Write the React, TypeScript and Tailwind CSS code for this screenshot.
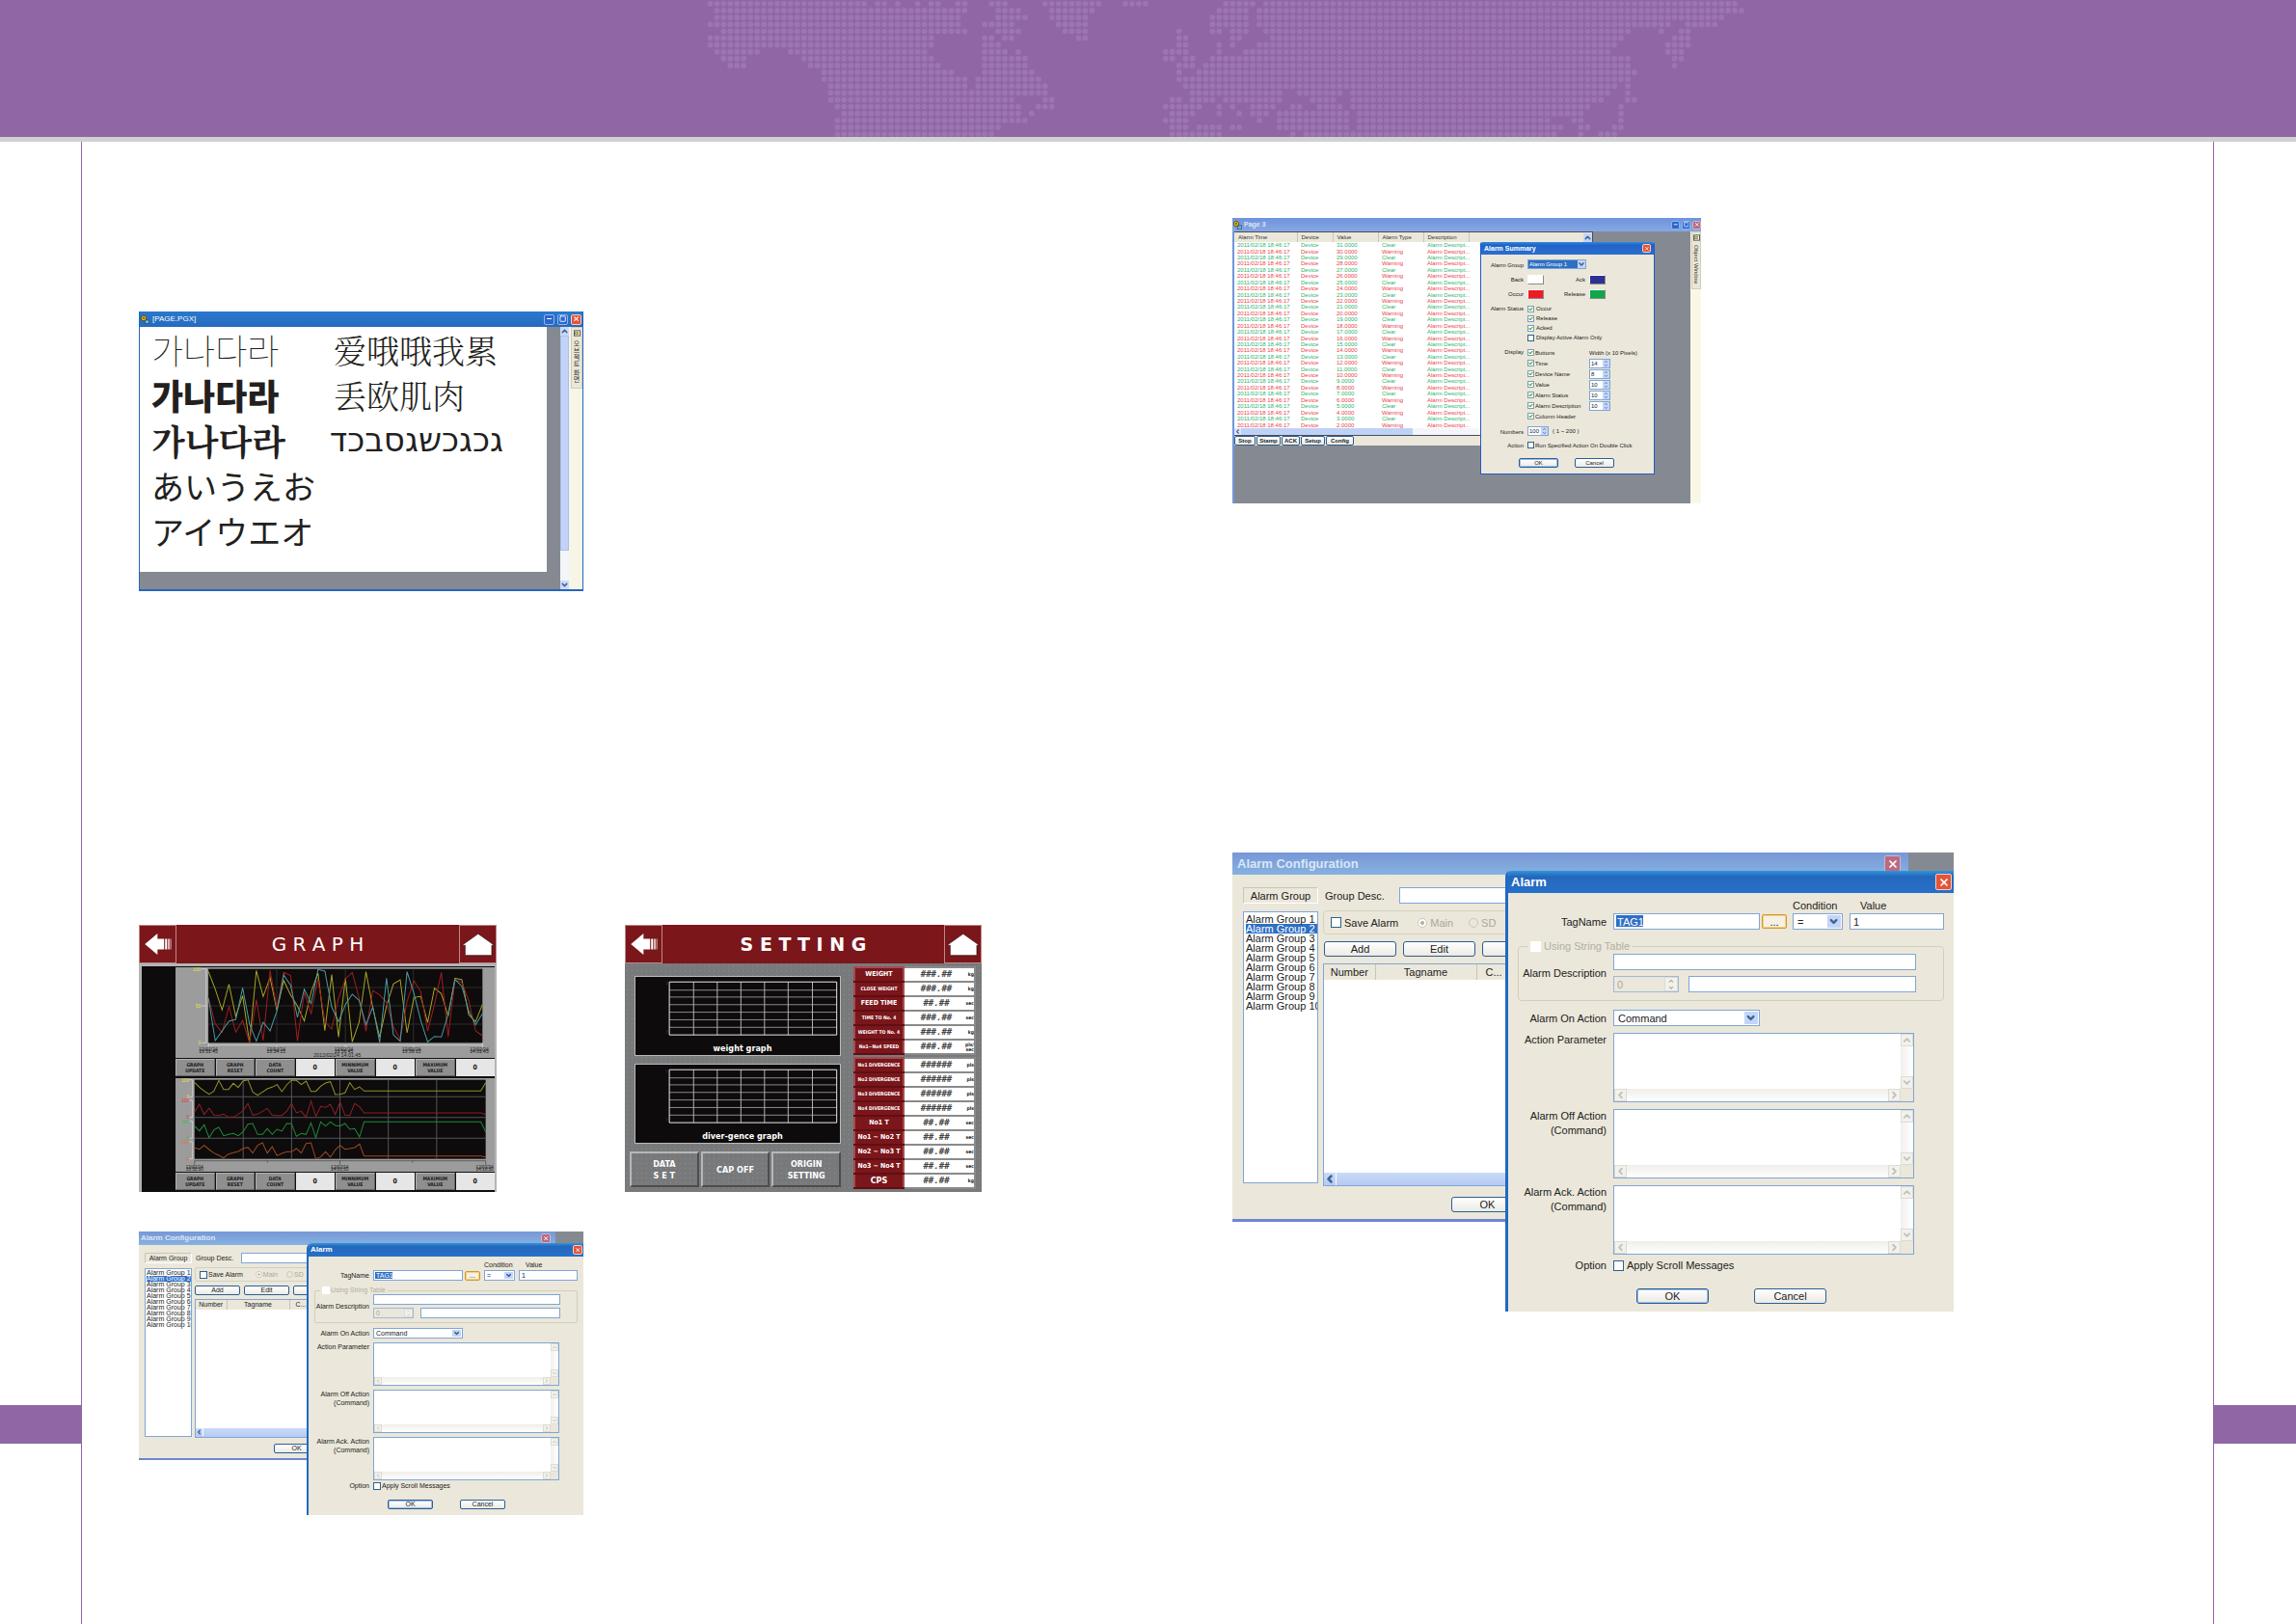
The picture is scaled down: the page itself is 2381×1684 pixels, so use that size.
import { useId } from 'react';
import type { ReactNode } from 'react';
import { Check, ChevronDown, ChevronLeft, ChevronRight, ChevronUp, Minus, Square, X } from 'lucide-react';
import clsx from 'clsx';

/* ------------------------------------------------------------------ */
/* Header: dotted world map                                            */
/* ------------------------------------------------------------------ */

// One entry per dot row, each pair is [first column, last column].
const MAP_ROWS: [number, number][][] = [
  [[0, 23], [25, 26], [28, 28], [31, 31], [33, 34], [37, 38], [42, 44], [50, 58], [62, 65], [77, 81], [83, 153]],
  [[1, 38], [43, 46], [51, 57], [76, 80], [82, 154]],
  [[1, 37], [43, 47], [51, 56], [75, 80], [82, 151]],
  [[0, 37], [41, 45], [52, 56], [75, 80], [82, 143], [146, 150]],
  [[2, 38], [43, 46], [53, 56], [70, 70], [75, 76], [78, 80], [83, 137], [142, 142], [145, 146]],
  [[0, 33], [41, 42], [44, 45], [55, 56], [70, 71], [78, 79], [84, 136], [144, 146]],
  [[0, 33], [41, 43], [70, 71], [76, 76], [78, 78], [82, 135], [143, 146]],
  [[1, 7], [12, 32], [41, 44], [46, 46], [68, 71], [76, 76], [80, 134], [143, 145]],
  [[2, 5], [14, 33], [41, 47], [68, 69], [71, 72], [75, 137], [144, 145]],
  [[3, 5], [15, 34], [41, 47], [70, 72], [74, 137], [144, 144]],
  [[17, 36], [41, 48], [70, 70], [73, 138]],
  [[17, 38], [40, 49], [70, 137]],
  [[18, 38], [40, 50], [71, 135], [137, 137]],
  [[18, 50], [72, 85], [88, 94], [96, 134], [137, 137]],
  [[18, 45], [50, 51], [69, 70], [72, 75], [77, 85], [90, 93], [96, 133], [137, 138]],
  [[19, 46], [49, 51], [68, 73], [76, 76], [78, 78], [81, 84], [87, 88], [91, 94], [96, 131], [136, 136]],
  [[20, 46], [48, 48], [69, 72], [76, 76], [79, 79], [81, 83], [85, 95], [97, 130], [136, 136]],
  [[19, 47], [68, 71], [82, 82], [85, 95], [97, 125], [129, 130], [136, 136]],
  [[19, 43], [69, 71], [73, 76], [78, 79], [85, 95], [97, 127], [130, 131], [135, 136]],
  [[19, 42], [69, 76], [87, 87], [89, 126], [130, 130], [133, 135]],
];

function DotMap() {
  return (
    <svg className="ml-[30.2%] h-[142px] w-[1100px]" viewBox="0 0 1100 142" fill="#9c76b0" aria-hidden="true">
      {MAP_ROWS.map((runs, row) =>
        runs.flatMap(([from, to]) =>
          Array.from({ length: to - from + 1 }, (_, i) => (
            <circle key={`${row}-${from + i}`} cx={17.5 + (from + i) * 6.945} cy={3.8 + row * 7.12} r={2.9} />
          )),
        ),
      )}
    </svg>
  );
}

/* ------------------------------------------------------------------ */
/* Windows chrome pieces                                               */
/* ------------------------------------------------------------------ */

function WindowButton({ kind, dim, className }: { kind: 'min' | 'max' | 'close'; dim?: boolean; className: string }) {
  const Icon = kind === 'min' ? Minus : kind === 'max' ? Square : X;
  return (
    <button
      type="button"
      aria-label={kind}
      className={clsx(
        'flex shrink-0 items-center justify-center rounded-xs border text-white',
        kind === 'close' ? (dim ? 'border-[#c9b6d6] bg-[#bb6a80]' : 'border-[#f3cfc4] bg-[#e2553a]') : 'border-[#8fb6ea] bg-[#2c66cf]',
        className,
      )}
    >
      <Icon className="h-4/5 w-4/5" strokeWidth={kind === 'max' ? 3 : 3.5} />
    </button>
  );
}

function AppIcon() {
  return (
    <svg viewBox="0 0 10 10" className="h-[9px] w-[9px] shrink-0" aria-hidden="true">
      <circle cx="3.4" cy="3.4" r="3" fill="#f4c21c" stroke="#3b3209" strokeWidth=".8" />
      <circle cx="3.4" cy="3.2" r="1" fill="#3b3209" />
      <path d="M5 5.4h4.4v4H4.6z" fill="#49b7e8" stroke="#152c57" strokeWidth=".6" />
      <path d="M6 7.6l1.4 1.2L9 6.6" stroke="#f4c21c" strokeWidth=".8" fill="none" />
    </svg>
  );
}

function Tick({ className, checked, disabled, id }: { className: string; checked?: boolean; disabled?: boolean; id: string }) {
  return (
    <span className={clsx('relative inline-flex shrink-0', className)}>
      <input
        id={id}
        type="checkbox"
        defaultChecked={checked}
        disabled={disabled}
        className={clsx('h-full w-full appearance-none border bg-white', disabled ? 'border-white' : checked ? 'border-[#7f9db9]' : 'border-[#2c628b]')}
      />
      {checked && <Check className="pointer-events-none absolute inset-0 h-full w-full p-px text-[#21a121]" strokeWidth={5} />}
    </span>
  );
}

function PushButton({ children, className, focus }: { children?: ReactNode; className: string; focus?: boolean }) {
  return (
    <button
      type="button"
      className={clsx(
        'flex shrink-0 items-center justify-center border border-[#2b5f93] bg-linear-to-b from-white to-[#eceae4] text-[#222]',
        focus && 'shadow-[inset_0_0_0_1px_#9dbdec]',
        className,
      )}
    >
      {children}
    </button>
  );
}

/* ------------------------------------------------------------------ */
/* Alarm configuration (drawn in two sizes)                            */
/* ------------------------------------------------------------------ */

const SIZES = {
  lg: {
    frame: 'h-[476px] w-[748px] text-[11px] leading-[12px]',
    title: 'h-[23px] pl-[5px] pr-[8px] text-[13px]',
    close: 'h-[17px] w-[17px]',
    back: 'h-[383px] w-[701px] border-b-3',
    backBody: 'gap-[5px] pl-[11px] pt-[13px]',
    groupCol: 'w-[78px] gap-[8px]',
    groupHead: 'h-[17px]',
    groupList: 'h-[282px] pt-[2px] pl-[2px] leading-[10px]',
    rightCol: 'gap-[7px]',
    descRow: 'h-[17px] pl-[2px]',
    descLabel: 'w-[77px]',
    saveBox: 'h-[25px] rounded-sm pl-[7px]',
    tick: 'h-[11px] w-[11px]',
    tickGap: 'ml-[3px]',
    radioA: 'ml-[20px] h-[10px] w-[10px]',
    radioB: 'ml-[16px] h-[10px] w-[10px]',
    buttonRow: 'gap-[7px] pl-[1px]',
    button: 'h-[16px] w-[75px] rounded-[3px]',
    listView: 'h-[231px]',
    listHead: 'h-[16px]',
    colA: 'w-[53px]',
    colB: 'w-[105px]',
    colC: 'pl-[9px]',
    bar: 'h-[13px]',
    barBox: 'h-[13px] w-[13px]',
    backOk: 'mt-[4px] ml-[133px]',
    front: 'top-[19px] left-[283px] border-l-3',
    frontTitle: 'h-[23px] pl-[3px] pr-[2px] text-[13px]',
    headRow: 'mt-[7px] h-[12px]',
    headCond: 'ml-[295px] w-[70px]',
    firstRow: 'mt-[2px]',
    label: 'w-[102px] mr-[7px]',
    field: 'h-[17px]',
    wide: 'w-[152px]',
    tagMark: 'bg-[length:28px_12px] bg-[position:2px_1px] pl-[3px]',
    dots: 'ml-[2px] h-[15px] w-[26px]',
    cond: 'ml-[6px] w-[52px]',
    arrow: 'w-[14px]',
    value: 'ml-[7px] w-[98px] pl-[3px]',
    fieldset: 'mt-[11px] ml-[10px] mr-[10px] h-[63px] rounded-sm',
    legend: 'ml-[9px] px-[3px] h-[12px]',
    inner: 'pt-[2px]',
    innerLabel: 'w-[91px] mr-[7px]',
    stack: 'w-[314px] gap-[6px]',
    spin: 'w-[68px] pl-[3px]',
    spinGap: 'gap-[10px]',
    rows: 'mt-[9px] gap-[7px]',
    area: 'h-[72px] w-[312px]',
    areaLabel: 'leading-[15px]',
    option: 'mt-[5px]',
    buttons: 'mt-[18px] ml-[133px] gap-[47px]',
    selectPad: 'pl-[4px]',
  },
  sm: {
    frame: 'h-[294px] w-[461px] text-[7px] leading-[8px]',
    title: 'h-[14px] pl-[2px] pr-[5px] text-[8px]',
    close: 'h-[10px] w-[10px]',
    back: 'h-[237px] w-[432px] border-b-2',
    backBody: 'gap-[3px] pl-[6px] pt-[8px]',
    groupCol: 'w-[49px] gap-[5px]',
    groupHead: 'h-[11px]',
    groupList: 'h-[175px] pt-px pl-px leading-[6px]',
    rightCol: 'gap-[4px]',
    descRow: 'h-[11px] pl-px',
    descLabel: 'w-[47px]',
    saveBox: 'h-[15px] rounded-xs pl-[4px]',
    tick: 'h-[8px] w-[8px]',
    tickGap: 'ml-px',
    radioA: 'ml-[13px] h-[7px] w-[7px]',
    radioB: 'ml-[9px] h-[7px] w-[7px]',
    buttonRow: 'gap-[4px]',
    button: 'h-[10px] w-[47px] rounded-xs',
    listView: 'h-[144px]',
    listHead: 'h-[10px]',
    colA: 'w-[32px]',
    colB: 'w-[65px]',
    colC: 'pl-[6px]',
    bar: 'h-[9px]',
    barBox: 'h-[8px] w-[8px]',
    backOk: 'mt-[2px] ml-[82px]',
    front: 'top-[12px] left-[174px] border-l-2',
    frontTitle: 'h-[14px] pl-[2px] pr-px text-[8px]',
    headRow: 'mt-[5px] h-[8px]',
    headCond: 'ml-[182px] w-[43px]',
    firstRow: 'mt-px',
    label: 'w-[63px] mr-[4px]',
    field: 'h-[11px]',
    wide: 'w-[93px]',
    tagMark: 'bg-[length:18px_7px] bg-[position:1px_1px] pl-[2px]',
    dots: 'ml-[2px] h-[10px] w-[16px]',
    cond: 'ml-[4px] w-[32px]',
    arrow: 'w-[9px]',
    value: 'ml-[4px] w-[61px] pl-[2px]',
    fieldset: 'mt-[6px] ml-[6px] mr-[6px] h-[38px] rounded-xs',
    legend: 'ml-[5px] px-[2px] h-[8px]',
    inner: 'pt-0',
    innerLabel: 'w-[56px] mr-[4px]',
    stack: 'w-[194px] gap-[3px]',
    spin: 'w-[42px] pl-[2px]',
    spinGap: 'gap-[7px]',
    rows: 'mt-[5px] gap-[4px]',
    area: 'h-[45px] w-[193px]',
    areaLabel: 'leading-[9px]',
    option: 'mt-[2px]',
    buttons: 'mt-[10px] ml-[82px] gap-[28px]',
    selectPad: 'pl-[2px]',
  },
};

type Sizes = (typeof SIZES)['lg'];

const FIELD = 'border border-[#7fa6d6] bg-white';

function XpSelect({ s, id, value, className }: { s: Sizes; id: string; value: string; className: string }) {
  return (
    <span className={clsx('relative inline-flex', FIELD, s.field, className)}>
      <select id={id} defaultValue={value} className={clsx('w-full appearance-none bg-transparent', s.selectPad)}>
        <option>{value}</option>
      </select>
      <span className={clsx('pointer-events-none absolute inset-y-px right-px flex items-center justify-center bg-[#c3d5f8] text-[#3f6394]', s.arrow)}>
        <ChevronDown className="h-full w-4/5" strokeWidth={5} />
      </span>
    </span>
  );
}

function ScrollArea({ s, id }: { s: Sizes; id: string }) {
  const box = clsx('flex items-center justify-center border border-[#dddbd2] bg-[#f2f1ec] text-[#c2c2bd]', s.barBox);
  return (
    <div className={clsx('flex flex-col', FIELD, s.area)}>
      <div className="flex min-h-0 flex-1">
        <textarea id={id} className="min-w-0 flex-1 resize-none bg-white" />
        <div className="flex flex-col justify-between bg-linear-to-r from-[#f1f0ee] to-white">
          <span className={box}><ChevronUp className="h-full w-full" strokeWidth={4} /></span>
          <span className={box}><ChevronDown className="h-full w-full" strokeWidth={4} /></span>
        </div>
      </div>
      <div className="flex bg-[#ebe7da]">
        <div className="flex flex-1 justify-between bg-linear-to-b from-[#efeeea] to-white">
          <span className={box}><ChevronLeft className="h-full w-full" strokeWidth={4} /></span>
          <span className={box}><ChevronRight className="h-full w-full" strokeWidth={4} /></span>
        </div>
        <span className={s.barBox} />
      </div>
    </div>
  );
}

function GroupWindow({ s, uid }: { s: Sizes; uid: string }) {
  return (
    <section className={clsx('flex shrink-0 flex-col overflow-hidden border-[#6f84d3] bg-[#ebe7da]', s.back)}>
      <div className={clsx('flex shrink-0 items-center justify-between bg-linear-to-b from-[#7797d6] to-[#86b2e2] font-bold text-[#dbe5f5]', s.title)}>
        <h2>Alarm Configuration</h2>
        <WindowButton kind="close" dim className={s.close} />
      </div>
      <div className={clsx('flex', s.backBody)}>
        <div className={clsx('flex shrink-0 flex-col', s.groupCol)}>
          <div className={clsx('flex items-center justify-center border border-[#c9c6b8] border-r-white border-b-white', s.groupHead)}>Alarm Group</div>
          <ul className={clsx('overflow-hidden whitespace-nowrap', FIELD, s.groupList)}>
            {Array.from({ length: 10 }, (_, i) => (
              <li key={i} className={clsx(i === 1 && 'bg-[#2f6fc4] text-white')}>Alarm Group {i + 1}</li>
            ))}
          </ul>
        </div>
        <div className={clsx('flex min-w-0 flex-1 flex-col', s.rightCol)}>
          <div className={clsx('flex items-center', s.descRow)}>
            <label htmlFor={`${uid}-desc`} className={clsx('shrink-0', s.descLabel)}>Group Desc.</label>
            <input id={`${uid}-desc`} className={clsx('h-full min-w-0 flex-1', FIELD)} />
          </div>
          <div className={clsx('flex items-center border border-[#d3d1c0]', s.saveBox)}>
            <Tick id={`${uid}-save`} className={s.tick} />
            <label htmlFor={`${uid}-save`} className={s.tickGap}>Save Alarm</label>
            <input id={`${uid}-main`} type="radio" name={`${uid}-where`} defaultChecked disabled className={clsx('shrink-0 appearance-none rounded-full border border-[#c9c7ba] bg-radial from-[#b5b3a6] from-30% to-white to-40%', s.radioA)} />
            <label htmlFor={`${uid}-main`} className={clsx('text-[#aca899]', s.tickGap)}>Main</label>
            <input id={`${uid}-sd`} type="radio" name={`${uid}-where`} disabled className={clsx('shrink-0 appearance-none rounded-full border border-[#c9c7ba]', s.radioB)} />
            <label htmlFor={`${uid}-sd`} className={clsx('text-[#aca899]', s.tickGap)}>SD</label>
          </div>
          <div className={clsx('flex', s.buttonRow)}>
            <PushButton className={s.button}>Add</PushButton>
            <PushButton className={s.button}>Edit</PushButton>
            <PushButton className={s.button} />
          </div>
          <div className={clsx('flex flex-col justify-between', FIELD, s.listView)}>
            <table className="w-full table-fixed text-left">
              <thead className="bg-[#ebe8db]">
                <tr className={s.listHead}>
                  <th className={clsx('border-r border-[#c7c5b2] text-center font-normal', s.colA)}>Number</th>
                  <th className={clsx('border-r border-[#c7c5b2] text-center font-normal', s.colB)}>Tagname</th>
                  <th className={clsx('font-normal', s.colC)}>C...</th>
                </tr>
              </thead>
            </table>
            <div className={clsx('flex bg-linear-to-b from-[#c9daf9] to-[#b6cbf3]', s.bar)}>
              <span className={clsx('flex items-center justify-center border-r border-white text-[#3f6394]', s.barBox)}>
                <ChevronLeft className="h-full w-full" strokeWidth={5} />
              </span>
            </div>
          </div>
          <div className={s.backOk}>
            <PushButton className={s.button}>OK</PushButton>
          </div>
        </div>
      </div>
    </section>
  );
}

function AlarmDialog({ s, uid }: { s: Sizes; uid: string }) {
  const label = clsx('shrink-0 text-right whitespace-nowrap', s.label);
  const areas = [
    ['param', 'Action Parameter', ''],
    ['off', 'Alarm Off Action', '(Command)'],
    ['ack', 'Alarm Ack. Action', '(Command)'],
  ];
  return (
    <section className={clsx('absolute right-0 bottom-0 overflow-hidden rounded-tl-md border-[#2069c4] bg-[#ebe7da]', s.front)}>
      <div className={clsx('flex items-center justify-between bg-linear-to-b from-[#3295dc] via-[#2468bd] via-25% to-[#2770c8] font-bold text-white', s.frontTitle)}>
        <h2>Alarm</h2>
        <WindowButton kind="close" className={s.close} />
      </div>
      <div className={clsx('flex', s.headRow)}>
        <label htmlFor={`${uid}-cond`} className={s.headCond}>Condition</label>
        <label htmlFor={`${uid}-value`}>Value</label>
      </div>
      <div className={clsx('flex items-center', s.firstRow)}>
        <label htmlFor={`${uid}-tag`} className={label}>TagName</label>
        <input
          id={`${uid}-tag`}
          defaultValue="TAG1"
          className={clsx('border border-[#7fa6d6] bg-white bg-[linear-gradient(#2f6fc4,#2f6fc4)] bg-no-repeat text-white', s.field, s.wide, s.tagMark)}
        />
        <button type="button" className={clsx('flex items-center justify-center rounded-xs border border-[#cf9a2f] bg-[#f4f1e6] shadow-[inset_0_0_0_1px_#f8cf7c]', s.dots)}>...</button>
        <XpSelect s={s} id={`${uid}-cond`} value="=" className={s.cond} />
        <input id={`${uid}-value`} defaultValue="1" className={clsx(FIELD, s.field, s.value)} />
      </div>

      <fieldset className={clsx('border border-[#d0cfbd]', s.fieldset)}>
        <legend className={s.legend}>
          <span className="flex items-center text-[#b0b0a2]">
            <Tick id={`${uid}-table`} disabled className={s.tick} />
            <label htmlFor={`${uid}-table`} className={s.tickGap}>Using String Table</label>
          </span>
        </legend>
        <div className={clsx('flex items-center', s.inner)}>
          <label htmlFor={`${uid}-adesc`} className={clsx('shrink-0 text-right whitespace-nowrap', s.innerLabel)}>Alarm Description</label>
          <div className={clsx('flex flex-col', s.stack)}>
            <input id={`${uid}-adesc`} className={clsx('w-full', FIELD, s.field)} />
            <div className={clsx('flex', s.spinGap)}>
              <span className={clsx('flex shrink-0 items-center justify-between border border-[#9fb9d8] text-[#aca899]', s.field, s.spin)}>
                <input aria-label="String number" defaultValue="0" disabled className="w-1/2 bg-transparent" />
                <span className={clsx('flex h-full flex-col border border-[#dddbd2] bg-[#f2f1ec]', s.arrow)}>
                  <ChevronUp className="h-1/2 w-full" strokeWidth={4} />
                  <ChevronDown className="h-1/2 w-full" strokeWidth={4} />
                </span>
              </span>
              <input aria-label="String text" className={clsx('min-w-0 flex-1', FIELD, s.field)} />
            </div>
          </div>
        </div>
      </fieldset>

      <div className={clsx('flex flex-col', s.rows)}>
        <div className="flex items-center">
          <label htmlFor={`${uid}-on`} className={label}>Alarm On Action</label>
          <XpSelect s={s} id={`${uid}-on`} value="Command" className={s.wide} />
        </div>
        {areas.map(([key, line1, line2]) => (
          <div key={key} className="flex items-start">
            <label htmlFor={`${uid}-${key}`} className={clsx(label, s.areaLabel)}>
              {line1}
              {line2 && <><br />{line2}</>}
            </label>
            <ScrollArea s={s} id={`${uid}-${key}`} />
          </div>
        ))}
      </div>
      <div className={clsx('flex items-center', s.option)}>
        <span className={label}>Option</span>
        <Tick id={`${uid}-scroll`} className={s.tick} />
        <label htmlFor={`${uid}-scroll`} className={s.tickGap}>Apply Scroll Messages</label>
      </div>
      <div className={clsx('flex', s.buttons)}>
        <PushButton focus className={s.button}>OK</PushButton>
        <PushButton className={s.button}>Cancel</PushButton>
      </div>
    </section>
  );
}

function AlarmConfiguration({ size, className }: { size: 'lg' | 'sm'; className?: string }) {
  const uid = useId();
  const s = SIZES[size];
  return (
    <div className={clsx('relative flex items-start text-[#222]', s.frame, className)}>
      <GroupWindow s={s} uid={uid} />
      <div className="h-1/12 flex-1 bg-[#858a92]" />
      <AlarmDialog s={s} uid={uid} />
    </div>
  );
}

/* ------------------------------------------------------------------ */
/* [PAGE.PGX] font sample window                                       */
/* ------------------------------------------------------------------ */

function SideTab({ children, className }: { children: ReactNode; className: string }) {
  return (
    <div className={clsx('ml-auto flex items-center gap-1 border border-[#d0cdb9] bg-[#ebe7d6] whitespace-nowrap text-[#333] [writing-mode:vertical-rl]', className)}>
      <svg viewBox="0 0 8 8" className="h-[7px] w-[7px] shrink-0" aria-hidden="true">
        <rect x=".5" y="1" width="7" height="6" fill="#fff" stroke="#444" />
        <rect x="2" y="2.5" width="3" height="3" fill="#e5d51e" stroke="#444" strokeWidth=".6" />
      </svg>
      {children}
    </div>
  );
}

function FontWindow() {
  return (
    <section className="flex h-[290px] w-[461px] flex-col border-x border-b-2 border-[#2666bd] bg-[#858a92]">
      <div className="flex h-[16px] shrink-0 items-center gap-[3px] bg-linear-to-b from-[#2a78cc] to-[#256bc0] px-px text-[8px] text-white">
        <AppIcon />
        <h2 className="flex-1 font-medium">[PAGE.PGX]</h2>
        <WindowButton kind="min" className="h-[11px] w-[11px]" />
        <WindowButton kind="max" className="h-[11px] w-[11px]" />
        <WindowButton kind="close" className="h-[11px] w-[11px]" />
      </div>
      <div className="flex min-h-0 flex-1">
        <div className="grid h-[254px] w-[422px] grid-cols-[189px_1fr] content-start bg-white px-[12px] text-[34px] leading-[47px] text-[#231f20]">
          <div className="font-['Noto_Sans_CJK_JP',sans-serif]">
            <p className="font-['Noto_Sans_CJK_KR',sans-serif] text-[36px] font-thin">가나다라</p>
            <p className="font-['Noto_Sans_CJK_KR',sans-serif] text-[36px] font-black">가나다라</p>
            <p className="font-['Noto_Serif_CJK_KR','Noto_Sans_CJK_KR',serif] text-[36px] font-bold">가나다라</p>
            <p>あいうえお</p>
            <p>アイウエオ</p>
          </div>
          <div className="font-['Noto_Serif_CJK_SC','Noto_Sans_CJK_SC',serif] font-light">
            <p>爱哦哦我累</p>
            <p>丢欧肌肉</p>
            <p dir="rtl" className="w-[176px] font-['DejaVu_Sans',sans-serif] font-normal whitespace-nowrap">גכגכשגסבכד</p>
          </div>
        </div>
        <div className="ml-auto flex w-[9px] flex-col justify-between bg-[#f4f5fb] text-[#3f6394]">
          <span className="bg-[#cbdaf9]"><ChevronUp className="h-[9px] w-[9px]" strokeWidth={4} /></span>
          <span className="flex-1 border border-[#a9c0ee] bg-[#c3d3f7]" />
          <span className="mt-[31px] bg-[#cbdaf9]"><ChevronDown className="h-[9px] w-[9px]" strokeWidth={4} /></span>
        </div>
        <div className="w-[14px] bg-[#f6f5e6]">
          <SideTab className="h-[64px] w-[12px] pt-[2px] font-['Noto_Sans_CJK_KR',sans-serif] text-[7px] leading-[10px]">오브젝트 화면</SideTab>
        </div>
      </div>
    </section>
  );
}

/* ------------------------------------------------------------------ */
/* Page 3 alarm list                                                   */
/* ------------------------------------------------------------------ */

const ALARM_ROWS = Array.from({ length: 30 }, (_, i) => ({
  value: `${31 - i}.0000`,
  type: i % 2 === 0 ? 'Clear' : 'Warning',
}));

function Spinner({ id, label, value }: { id: string; label: string; value: string }) {
  return (
    <span className={clsx('flex h-[10px] w-[22px] items-center', FIELD)}>
      <input id={id} aria-label={label} defaultValue={value} className="min-w-0 flex-1 pl-px leading-[8px]" />
      <span className="flex h-full w-[7px] flex-col bg-[#c3d5f8] text-[#3f6394]">
        <ChevronUp className="h-1/2 w-full" strokeWidth={5} />
        <ChevronDown className="h-1/2 w-full" strokeWidth={5} />
      </span>
    </span>
  );
}

function Swatch({ label, color }: { label: string; color: string }) {
  return (
    <>
      <span className="text-right">{label}</span>
      <button type="button" aria-label={label} className={clsx('h-[10px] w-[17px] border border-white border-r-[#8d8a7d] border-b-[#8d8a7d]', color)} />
    </>
  );
}

function AlarmSummary() {
  const status = ['Occur', 'Release', 'Acked', 'Display Active Alarm Only'];
  const display = [
    ['Buttons', ''],
    ['Time', '14'],
    ['Device Name', '8'],
    ['Value', '10'],
    ['Alarm Status', '10'],
    ['Alarm Description', '10'],
    ['Column Header', ''],
  ];
  const label = 'w-[44px] shrink-0 pt-px text-right';
  return (
    <section className="absolute top-[25px] left-[257px] h-[241px] w-[181px] overflow-hidden rounded-t-xs border border-t-0 border-[#1f5cc0] bg-[#ebe7da] text-[6px] leading-[8px] text-[#222]">
      <div className="flex h-[13px] items-center justify-between bg-linear-to-b from-[#2f8ae0] via-[#2163c6] via-25% to-[#2a6fd0] px-[3px] text-[7px] font-bold text-white">
        <h2>Alarm Summary</h2>
        <WindowButton kind="close" className="h-[9px] w-[9px]" />
      </div>
      <div className="mt-[5px] flex items-center gap-[4px]">
        <label htmlFor="sum-group" className={label}>Alarm Group</label>
        <span className={clsx('relative flex h-[10px] w-[61px]', FIELD)}>
          <select id="sum-group" defaultValue="Alarm Group 1" className="w-[51px] appearance-none bg-[#2f6fc4] pl-px leading-[8px] text-white">
            <option>Alarm Group 1</option>
          </select>
          <span className="pointer-events-none absolute inset-y-0 right-0 flex w-[8px] items-center justify-center bg-[#c3d5f8] text-[#3f6394]">
            <ChevronDown className="h-full w-full" strokeWidth={5} />
          </span>
        </span>
      </div>
      <div className="mt-[6px] grid grid-cols-[44px_17px_39px_17px] items-center gap-x-[4px] gap-y-[5px]">
        <Swatch label="Back" color="bg-white" />
        <Swatch label="Ack" color="bg-[#2e3192]" />
        <Swatch label="Occur" color="bg-[#ed1c24]" />
        <Swatch label="Release" color="bg-[#0fa74a]" />
      </div>
      <div className="mt-[5px] flex gap-[4px]">
        <span className={label}>Alarm Status</span>
        <div>
          {status.map((name, i) => (
            <div key={name} className="flex h-[10px] items-center gap-[2px]">
              <Tick id={`sum-s${i}`} checked={i < 3} className="h-[7px] w-[7px]" />
              <label htmlFor={`sum-s${i}`}>{name}</label>
            </div>
          ))}
        </div>
      </div>
      <div className="mt-[5px] flex gap-[4px]">
        <span className={label}>Display</span>
        <div>
          {display.map(([name, width], i) => (
            <div key={name} className="flex h-[11px] items-center">
              <Tick id={`sum-d${i}`} checked className="mr-px h-[7px] w-[7px]" />
              <label htmlFor={`sum-d${i}`} className="w-[56px]">{name}</label>
              {width && <Spinner id={`sum-w${i}`} label={`${name} width`} value={width} />}
              {i === 0 && <span>Width (x 10 Pixels)</span>}
            </div>
          ))}
        </div>
      </div>
      <div className="mt-[5px] flex items-center gap-[4px]">
        <label htmlFor="sum-num" className={label}>Numbers</label>
        <Spinner id="sum-num" label="Numbers" value="100" />
        <span>( 1 ~ 200 )</span>
      </div>
      <div className="mt-[5px] flex items-center gap-[4px]">
        <span className={label}>Action</span>
        <span className="flex items-center gap-px">
          <Tick id="sum-run" className="h-[7px] w-[7px]" />
          <label htmlFor="sum-run">Run Specified Action On Double Click</label>
        </span>
      </div>
      <div className="mt-[9px] ml-[39px] flex gap-[17px]">
        <PushButton focus className="h-[10px] w-[41px] rounded-xs">OK</PushButton>
        <PushButton className="h-[10px] w-[41px] rounded-xs">Cancel</PushButton>
      </div>
    </section>
  );
}

function AlarmListWindow() {
  const head = 'border-r border-[#c7c5b2] pl-[4px] font-normal';
  return (
    <section className="relative flex h-[296px] w-[486px] flex-col bg-[#858a92]">
      <div className="flex h-[14px] shrink-0 items-center gap-[2px] bg-linear-to-b from-[#6f93dc] to-[#86a8e4] pl-px text-[7px] text-[#dbe5f5]">
        <AppIcon />
        <h2 className="flex-1 font-bold">Page 3</h2>
        <WindowButton kind="min" className="h-[9px] w-[9px]" />
        <WindowButton kind="max" className="h-[9px] w-[9px]" />
        <WindowButton kind="close" dim className="h-[9px] w-[9px]" />
      </div>
      <div className="flex flex-1 border-l-2 border-[#6f97dc]">
        <div className="w-[372px]">
          <div className="flex h-[212px] flex-col justify-between border-t border-r border-b border-[#4a4d55] bg-white">
            <table className="w-full table-fixed text-left text-[6px] leading-[6px] whitespace-nowrap">
              <thead className="bg-[#ebe8db] text-[#333]">
                <tr className="h-[10px]">
                  <th className={clsx(head, 'w-[65px]')}>Alarm Time</th>
                  <th className={clsx(head, 'w-[37px]')}>Device</th>
                  <th className={clsx(head, 'w-[47px]')}>Value</th>
                  <th className={clsx(head, 'w-[47px]')}>Alarm Type</th>
                  <th className={clsx(head, 'w-[47px]')}>Description</th>
                  <th className="h-[10px]">
                    <span className="flex justify-end">
                      <ChevronUp className="h-[9px] w-[9px] bg-[#c3d5f8] text-[#3f6394]" strokeWidth={4} />
                    </span>
                  </th>
                </tr>
              </thead>
            </table>
            <table className="h-[194px] w-full table-fixed text-left text-[6px] leading-[6px] whitespace-nowrap">
              <colgroup>
                <col className="w-[66px]" />
                <col className="w-[37px]" />
                <col className="w-[47px]" />
                <col className="w-[47px]" />
                <col />
              </colgroup>
              <tbody>
                {ALARM_ROWS.map((row) => (
                  <tr key={row.value} className={row.type === 'Clear' ? 'text-[#2bb673]' : 'text-[#ee3f48]'}>
                    <td className="pl-[3px]">2011/02/18 18:46:17</td>
                    <td className="pl-[3px]">Device</td>
                    <td className="pl-[3px]">{row.value}</td>
                    <td className="pl-[3px]">{row.type}</td>
                    <td className="pl-[3px]">Alarm Descript...</td>
                  </tr>
                ))}
              </tbody>
            </table>
            <div className="flex h-[7px] bg-[#f4f5fb]">
              <ChevronLeft className="h-[7px] w-[7px] bg-[#dde6fb] text-[#3f6394]" strokeWidth={4} />
              <span className="w-[178px] bg-[#bfd2f6]" />
            </div>
          </div>
          <div className="flex h-[10px] gap-px bg-[#ebe7da] text-[6px] leading-[8px] font-bold">
            <PushButton className="w-[22px] rounded-xs">Stop</PushButton>
            <PushButton className="w-[25px] rounded-xs">Stamp</PushButton>
            <PushButton className="w-[19px] rounded-xs">ACK</PushButton>
            <PushButton className="w-[25px] rounded-xs">Setup</PushButton>
            <PushButton className="w-[29px] rounded-xs">Config</PushButton>
          </div>
        </div>
        <div className="ml-auto w-[11px] bg-[#f9f8e6]">
          <SideTab className="h-[60px] w-[10px] pt-[2px] text-[6px] leading-[8px]">Object Window</SideTab>
        </div>
      </div>
      <AlarmSummary />
    </section>
  );
}

/* ------------------------------------------------------------------ */
/* HMI panels                                                          */
/* ------------------------------------------------------------------ */

function HmiHeader({ title, className }: { title: string; className?: string }) {
  const corner = 'flex w-[39px] shrink-0 items-center justify-center border border-[#b98a8c]';
  return (
    <header className="flex h-[40px] shrink-0 items-stretch bg-[#7b161b] font-['DejaVu_Sans',sans-serif] text-white">
      <button type="button" aria-label="Back" className={corner}>
        <svg viewBox="0 0 80 64" className="h-[22px] w-[28px]" fill="#fff" aria-hidden="true">
          <path d="M0 32L38 0v16h20v32H38v16z" />
          <path d="M61 16h6v32h-6zM70 16h4v32h-4zM77 16h2v32h-2z" />
        </svg>
      </button>
      <h2 className={clsx('flex flex-1 items-center justify-center', className)}>{title}</h2>
      <button type="button" aria-label="Home" className={corner}>
        <svg viewBox="0 0 104 76" className="h-[25px] w-[35px]" aria-hidden="true">
          <path d="M53 4L2 40h10v32h84V40h8z" fill="#fff" stroke="#2b0b0c" strokeWidth="2" />
        </svg>
      </button>
    </header>
  );
}

function HmiToolbar() {
  const cells = ['GRAPH UPDATE', 'GRAPH RESET', 'DATA COUNT', '0', 'MINNIMUM VALUE', '0', 'MAXIMUM VALUE', '0'];
  return (
    <div className="grid h-[20px] grid-cols-8 gap-px bg-[#111] py-px font-['DejaVu_Sans_Condensed','DejaVu_Sans',sans-serif] leading-[6px] font-bold">
      {cells.map((text, i) =>
        text === '0' ? (
          <output key={i} className="flex items-center justify-center bg-[#e6e6e6] text-[7px] text-[#111]">{text}</output>
        ) : (
          <button key={i} type="button" className="border border-[#b4b4b4] border-r-[#666] border-b-[#666] bg-[#8f8f8f] px-[5px] text-[5px] text-[#1a1a1a]">
            {text}
          </button>
        ),
      )}
    </div>
  );
}

const TREND = {
  yellow: [187, 242, 307, 227, 327, 262, 409, 184, 265, 206, 308, 215, 260, 295, 341, 250, 192, 371, 197, 391, 208, 406, 345, 188, 300, 391, 295, 226, 213, 378, 268, 265, 346, 239, 256, 326, 208, 213, 322, 343, 290],
  red: [268, 350, 377, 296, 376, 340, 408, 275, 402, 184, 300, 190, 200, 403, 252, 318, 210, 343, 366, 270, 210, 190, 270, 373, 246, 260, 283, 360, 397, 280, 216, 250, 372, 290, 190, 390, 212, 222, 277, 372, 387],
  cyan: [270, 402, 372, 342, 336, 238, 350, 404, 345, 372, 310, 198, 230, 330, 242, 287, 181, 186, 298, 343, 290, 258, 277, 353, 297, 408, 208, 384, 404, 188, 255, 340, 406, 389, 391, 320, 212, 233, 310, 353, 318],
};

// Each strip trace holds the moving part, then stays flat until the last sample.
const STRIPS = [
  { color: '#8f9427', top: 524, flat: 559, end: 533, ys: [532, 547, 559, 569, 559, 526, 554, 554, 535, 548, 528, 524, 562, 572, 562, 552, 547, 539, 561, 540, 525, 526, 539, 528, 560, 560, 544, 534, 530, 570, 569, 565, 533, 554, 546] },
  { color: '#8c2027', top: 588, flat: 627, end: 632, ys: [625, 600, 632, 612, 634, 635, 631, 640, 640, 632, 620, 598, 634, 631, 622, 613, 634, 635, 635, 622, 598, 627, 622, 641, 590, 638, 607, 610, 600, 632, 592, 634, 635, 598, 608] },
  { color: '#1f8a3d', top: 653, flat: 655, end: 686, ys: [668, 683, 664, 704, 680, 672, 698, 694, 691, 698, 686, 662, 660, 694, 694, 676, 694, 678, 684, 660, 661, 700, 691, 694, 658, 704, 655, 668, 655, 666, 668, 660, 678, 676, 702] },
  { color: '#9a4a26', top: 717, flat: 761, end: 764, ys: [736, 740, 728, 741, 752, 759, 767, 755, 751, 747, 738, 734, 752, 728, 720, 752, 732, 760, 753, 748, 748, 738, 752, 722, 720, 770, 764, 748, 765, 742, 728, 740, 738, 735, 724] },
];

const STRIP_LABELS = ['#e6e23c', '#ee2a34', '#2fc24b', '#ec6a38'];

const line = (ys: number[], x0: number, step: number) => ys.map((y, i) => `${x0 + i * step},${y}`).join(' ');

function TrendChart() {
  return (
    <svg viewBox="155 174 990 282" className="block h-[94px] w-full bg-[#9c9c9c]" preserveAspectRatio="none" role="img" aria-label="Trend graph">
      <rect x="257" y="179" width="850" height="230" fill="#0d0b0b" />
      <path d="M257 237h850M257 294h850M257 351h850M469 179v230M682 179v230M893 179v230" stroke="#2f2e2e" strokeWidth="3" />
      <g fill="none" strokeWidth="3">
        <polyline points={line(TREND.yellow, 257, 21.25)} stroke="#a5a524" />
        <polyline points={line(TREND.red, 257, 21.25)} stroke="#a01d22" />
        <polyline points={line(TREND.cyan, 257, 21.25)} stroke="#4a9ba3" />
      </g>
      <path d="M250 179v230M236 179h14M236 294h14M236 409h14M257 416h850M257 409v14M469 416v10M682 416v10M893 416v10M1107 409v16" stroke="#e4e4e4" strokeWidth="2" fill="none" />
      <g fill="#e6e23c" fontSize="15" textAnchor="end">
        <text x="234" y="186">100</text>
        <text x="234" y="299">50</text>
        <text x="234" y="414">0</text>
      </g>
      <g fill="#222" fontSize="15" textAnchor="middle">
        {['13:51:45', '13:54:15', '13:56:45', '13:59:15', '14:01:45'].map((time, i) => (
          <g key={time}>
            <text x={257 + i * 210} y="434">12/02/24</text>
            <text x={257 + i * 210} y="442">{time}</text>
          </g>
        ))}
        <text x="657" y="452" fontSize="16">2012/02/24 14:01:45</text>
      </g>
    </svg>
  );
}

function StripChart() {
  return (
    <svg viewBox="155 519 990 291" className="block h-[97px] w-full bg-[#9c9c9c]" preserveAspectRatio="none" role="img" aria-label="Strip graphs">
      <rect x="214" y="524" width="903" height="246" fill="#0d0b0b" />
      <path d="M214 577h903M214 641h903M214 706h903M365 524v246M515 524v246M665 524v246M815 524v246M965 524v246" stroke="#55555a" strokeWidth="3" />
      {STRIPS.map((strip, i) => (
        <g key={strip.color}>
          <polyline
            points={`${line(strip.ys, 214, 15.05)} 740,${strip.flat} 1102,${strip.flat} 1117,${strip.end}`}
            fill="none"
            stroke={strip.color}
            strokeWidth="3"
          />
          <path d={`M198 ${strip.top}h10v53h-10`} fill="none" stroke="#e4e4e4" strokeWidth="2" />
          <g fill={STRIP_LABELS[i]} fontSize="14" textAnchor="end">
            <text x="197" y={strip.top + 6}>100</text>
            <text x="197" y={strip.top + 58}>0</text>
          </g>
        </g>
      ))}
      <path d="M214 776h903M214 776v12M440 776v6M665 776v12M890 776v6M1117 776v12" stroke="#444" strokeWidth="2" />
      <g fill="#222" fontSize="14" textAnchor="middle">
        {['13:52:30', '14:01:30', '14:10:30'].map((time, i) => (
          <g key={time}>
            <text x={214 + i * 450} y="801">12/02/24</text>
            <text x={214 + i * 450} y="808">{time}</text>
          </g>
        ))}
      </g>
    </svg>
  );
}

function GraphPanel() {
  return (
    <section className="flex h-[277px] w-[371px] flex-col bg-[#9c9c9c]">
      <HmiHeader title="G R A P H" className="text-[20px]" />
      <div className="flex min-h-0 flex-1 border-t-3 border-r-2 border-l-3 border-[#b4b4b4] bg-[#0d0b0b] pt-px">
        <div className="w-[35px] shrink-0" />
        <div className="min-w-0 flex-1 font-['Liberation_Sans',sans-serif]">
          <TrendChart />
          <HmiToolbar />
          <div className="h-px bg-[#0d0b0b]" />
          <StripChart />
          <HmiToolbar />
        </div>
      </div>
    </section>
  );
}

const WEIGHT_ROWS = [
  ['WEIGHT', '###.##', 'kg'],
  ['CLOSE WEIGHT', '###.##', 'kg'],
  ['FEED TIME', '##.##', 'sec'],
  ['TIME TO No. 4', '###.##', 'sec'],
  ['WEIGHT TO No. 4', '###.##', 'kg'],
  ['No1~No4 SPEED', '###.##', 'pls/ sec'],
];

const DIVERGENCE_ROWS = [
  ['No1 DIVERGENCE', '######', 'pls'],
  ['No2 DIVERGENCE', '######', 'pls'],
  ['No3 DIVERGENCE', '######', 'pls'],
  ['No4 DIVERGENCE', '######', 'pls'],
  ['No1 T', '##.##', 'sec'],
  ['No1 ~ No2 T', '##.##', 'sec'],
  ['No2 ~ No3 T', '##.##', 'sec'],
  ['No3 ~ No4 T', '##.##', 'sec'],
  ['CPS', '##.##', 'kg'],
];

function ValueTable({ rows }: { rows: string[][] }) {
  return (
    <table className="w-full table-fixed border border-[#4a1416] text-center leading-[5px] font-bold">
      <tbody>
        {rows.map(([name, value, unit]) => (
          <tr key={name} className="h-[15px]">
            <th className={clsx('w-[51px] border-2 border-[#a64b50] border-b-[#5f0f14] bg-[#7b161b] p-0 whitespace-nowrap text-white', name.length > 11 ? 'text-[5px]' : name === 'CPS' ? 'text-[9px]' : 'text-[7px]')}>
              {name}
            </th>
            <td className="border-2 border-r-0 border-[#8a8a8a] bg-white pl-[8px] font-['DejaVu_Sans_Mono',monospace] text-[9px] font-bold italic text-[#444]">{value}</td>
            <td className="w-[15px] border-2 border-l-0 border-[#8a8a8a] bg-white text-right text-[5px] text-[#222]">{unit}</td>
          </tr>
        ))}
      </tbody>
    </table>
  );
}

function GridBox({ caption, mark }: { caption: string; mark: string }) {
  return (
    <figure className="flex h-[83px] flex-col items-center border border-[#b9b9b9] bg-[#0d0b0b] text-white">
      <svg viewBox="0 0 640 205" className="h-[68px] w-full" preserveAspectRatio="none" aria-hidden="true">
        <path d="M106 42h524M106 64h524M106 88h524M106 112h524M106 136h524M106 160h524" stroke="#8d8d8d" strokeWidth="3" />
        <path d="M182 16v168M256 16v168M330 16v168M404 16v168M478 16v168M554 16v168" stroke="#b5b5b5" strokeWidth="3" />
        <path d="M106 16h524v168H106z" fill="none" stroke="#eee" strokeWidth="3" />
        <text x="94" y="28" fontSize="16" fill={mark}>?</text>
        <text x="94" y="180" fontSize="16" fill={mark}>?</text>
      </svg>
      <figcaption className="pl-[10px] text-[9px] leading-[14px] font-bold">{caption}</figcaption>
    </figure>
  );
}

function SettingPanel() {
  const key = 'flex h-[37px] flex-1 items-center justify-center border-2 border-[#b5b7b9] border-r-[#4b4d4f] border-b-[#4b4d4f] text-center text-[9px] leading-[12px] font-bold';
  return (
    <section className="flex h-[277px] w-[370px] flex-col bg-[#77797b] bg-radial-[at_50%_50%] from-[#8b8d8f] from-15% to-[#77797b] to-25% bg-[length:5px_5px] font-['DejaVu_Sans_Condensed','DejaVu_Sans',sans-serif]">
      <HmiHeader title="S E T T I N G" className="text-[19px] font-bold" />
      <div className="flex flex-1 justify-between pr-[6px] pl-[5px]">
        <div className="flex w-[219px] flex-col gap-[8px] pt-[13px]">
          <div className="flex flex-col gap-[8px] pl-[5px]">
            <GridBox caption="weight graph" mark="#a3262b" />
            <GridBox caption="diver-gence graph" mark="#2b2f8f" />
          </div>
          <div className="flex gap-[2px] text-white">
            <button type="button" className={key}>DATA<br />S E T</button>
            <button type="button" className={key}>CAP OFF</button>
            <button type="button" className={key}>ORIGIN<br />SETTING</button>
          </div>
        </div>
        <div className="flex w-[127px] flex-col gap-[2px] pt-[3px]">
          <ValueTable rows={WEIGHT_ROWS} />
          <ValueTable rows={DIVERGENCE_ROWS} />
        </div>
      </div>
    </section>
  );
}

/* ------------------------------------------------------------------ */

function SideMargin({ side }: { side: 'left' | 'right' }) {
  return (
    <aside className={clsx('flex shrink-0 flex-col justify-end border-[#9066a5] pb-[187px]', side === 'left' ? 'w-[85px] border-r' : 'w-[86px] border-l')}>
      <div className="h-[40px] bg-[#9066a5]" />
    </aside>
  );
}

export default function App() {
  return (
    <div className="flex min-h-screen flex-col overflow-hidden bg-white font-['Liberation_Sans',Arial,sans-serif]">
      <header className="overflow-hidden border-b-5 border-[#d2d1d2] bg-[#9066a5]">
        <DotMap />
      </header>
      <div className="flex flex-1">
        <SideMargin side="left" />
        <main className="grid flex-1 grid-cols-2 items-start">
          <div className="pt-[176px] pl-[59px]">
            <FontWindow />
            <div className="mt-[346px] flex gap-[133px]">
              <GraphPanel />
              <SettingPanel />
            </div>
            <AlarmConfiguration size="sm" className="mt-[41px]" />
          </div>
          <div className="pt-[79px] pl-[88px]">
            <AlarmListWindow />
            <AlarmConfiguration size="lg" className="mt-[362px]" />
          </div>
        </main>
        <SideMargin side="right" />
      </div>
    </div>
  );
}
